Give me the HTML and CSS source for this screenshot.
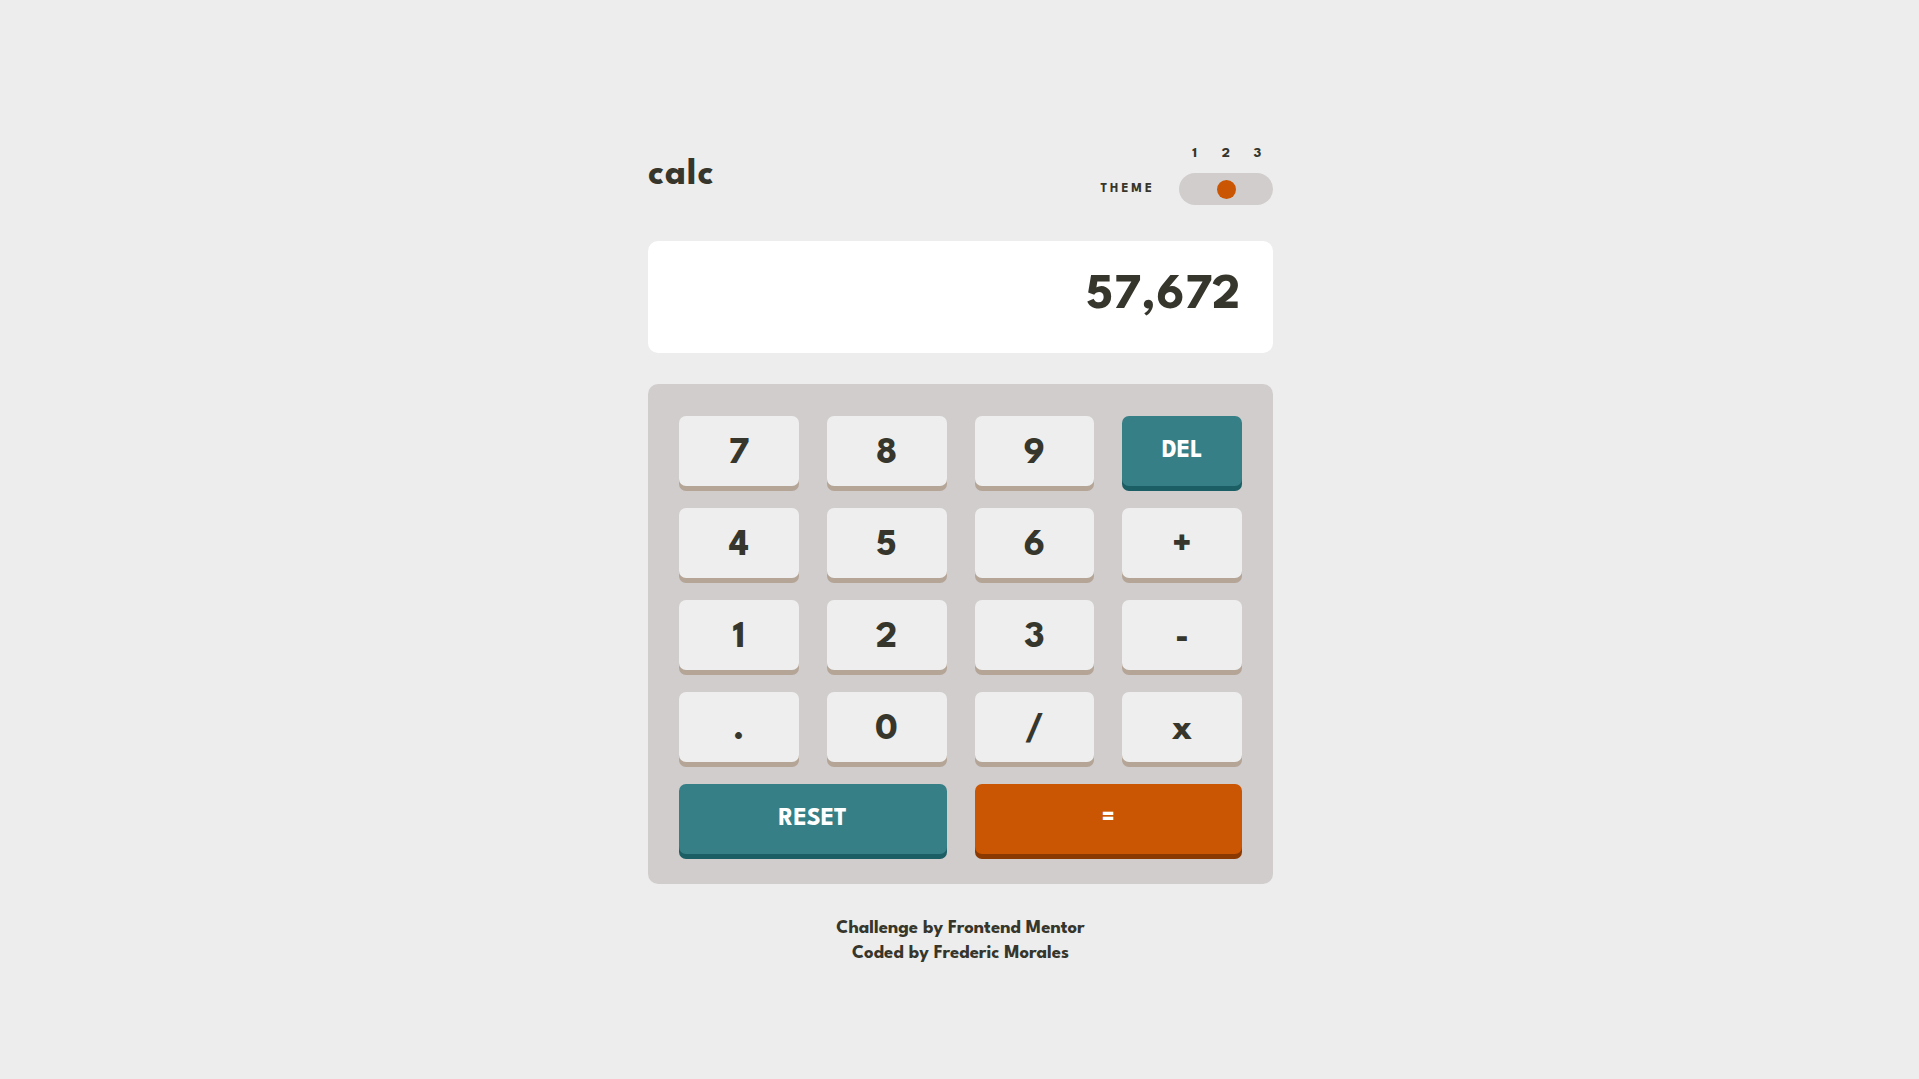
FILE: index.html
```html
<!DOCTYPE html>
<html lang="en">
<head>
<meta charset="utf-8">
<title>Calculator app</title>
<link rel="stylesheet" href="styles.css">
</head>
<body>
<main class="calc">
  <header class="header">
    <h1 class="logo">calc</h1>
    <div class="theme">
      <span class="theme-label">THEME</span>
      <div class="switch-wrap">
        <div class="nums"><span>1</span><span>2</span><span>3</span></div>
        <div class="switch"><span class="knob"></span></div>
      </div>
    </div>
  </header>
  <section class="screen">57,672</section>
  <section class="keypad">
    <button class="key">7</button>
    <button class="key">8</button>
    <button class="key">9</button>
    <button class="key key-del">DEL</button>
    <button class="key">4</button>
    <button class="key">5</button>
    <button class="key">6</button>
    <button class="key">+</button>
    <button class="key">1</button>
    <button class="key">2</button>
    <button class="key">3</button>
    <button class="key">-</button>
    <button class="key">.</button>
    <button class="key">0</button>
    <button class="key">/</button>
    <button class="key">x</button>
    <button class="key key-reset">RESET</button>
    <button class="key key-equal">=</button>
  </section>
  <footer class="footer">
    <p>Challenge by Frontend Mentor</p>
    <p>Coded by Frederic Morales</p>
  </footer>
</main>
</body>
</html>
```

FILE: styles.css
```css
* { box-sizing: border-box; }

body {
  margin: 0;
  padding-left: 2px;
  background: #ededed;
  color: #36362c;
  font-family: "League Spartan", Lato, "Open Sans", sans-serif;
  font-weight: 700;
}

.calc {
  width: 625px;
  margin: 0 auto;
  padding-top: 145px;
}

.header {
  display: flex;
  justify-content: space-between;
  align-items: flex-end;
  height: 60px;
}

.logo {
  margin: 0 0 13px 0;
  font-size: 37px;
  line-height: 34px;
  font-weight: 700;
  letter-spacing: 1.2px;
}

.theme {
  display: flex;
  align-items: flex-end;
  gap: 24px;
}

.theme-label {
  font-size: 13px;
  letter-spacing: 3px;
  line-height: 32px;
}

.switch-wrap {
  width: 94px;
}

.nums {
  display: flex;
  font-size: 14.5px;
  line-height: 16px;
  margin-bottom: 11px;
}

.nums span {
  flex: 1;
  text-align: center;
}

.switch {
  height: 32px;
  border-radius: 16px;
  background: #d2cdcd;
  display: grid;
  grid-template-columns: 1fr 1fr 1fr;
  align-items: center;
  padding: 0 5px;
}

.knob {
  grid-column: 2;
  justify-self: center;
  width: 19px;
  height: 19px;
  border-radius: 50%;
  background: #ca5502;
}

.screen {
  margin-top: 36px;
  height: 112px;
  border-radius: 10px;
  background: #ffffff;
  padding: 30px 32px 0;
  text-align: right;
  font-size: 50px;
  line-height: 50px;
  letter-spacing: 0.5px;
}

.keypad {
  margin-top: 31px;
  background: #d2cdcd;
  border-radius: 10px;
  padding: 32px 31px 30px;
  display: grid;
  grid-template-columns: repeat(4, 1fr);
  column-gap: 28px;
  row-gap: 22px;
}

.key {
  height: 70px;
  border: 0;
  border-radius: 7px;
  background: #eeeeee;
  box-shadow: 0 5px 0 #b4a597;
  color: #36362c;
  font-family: inherit;
  font-weight: 700;
  font-size: 38px;
  line-height: 76px;
  padding: 0;
}

.key-del,
.key-reset,
.key-equal {
  color: #ffffff;
  font-size: 25px;
  line-height: 68px;
}

.key-del,
.key-reset {
  background: #377f86;
  box-shadow: 0 5px 0 #1b5f65;
}

.key-reset {
  grid-column: 1 / span 2;
}

.key-equal {
  grid-column: 3 / span 2;
  background: #ca5502;
  box-shadow: 0 5px 0 #893901;
}

.footer {
  margin-top: 32px;
  text-align: center;
  font-size: 18.7px;
  line-height: 25px;
}

.footer p {
  margin: 0;
}
```
